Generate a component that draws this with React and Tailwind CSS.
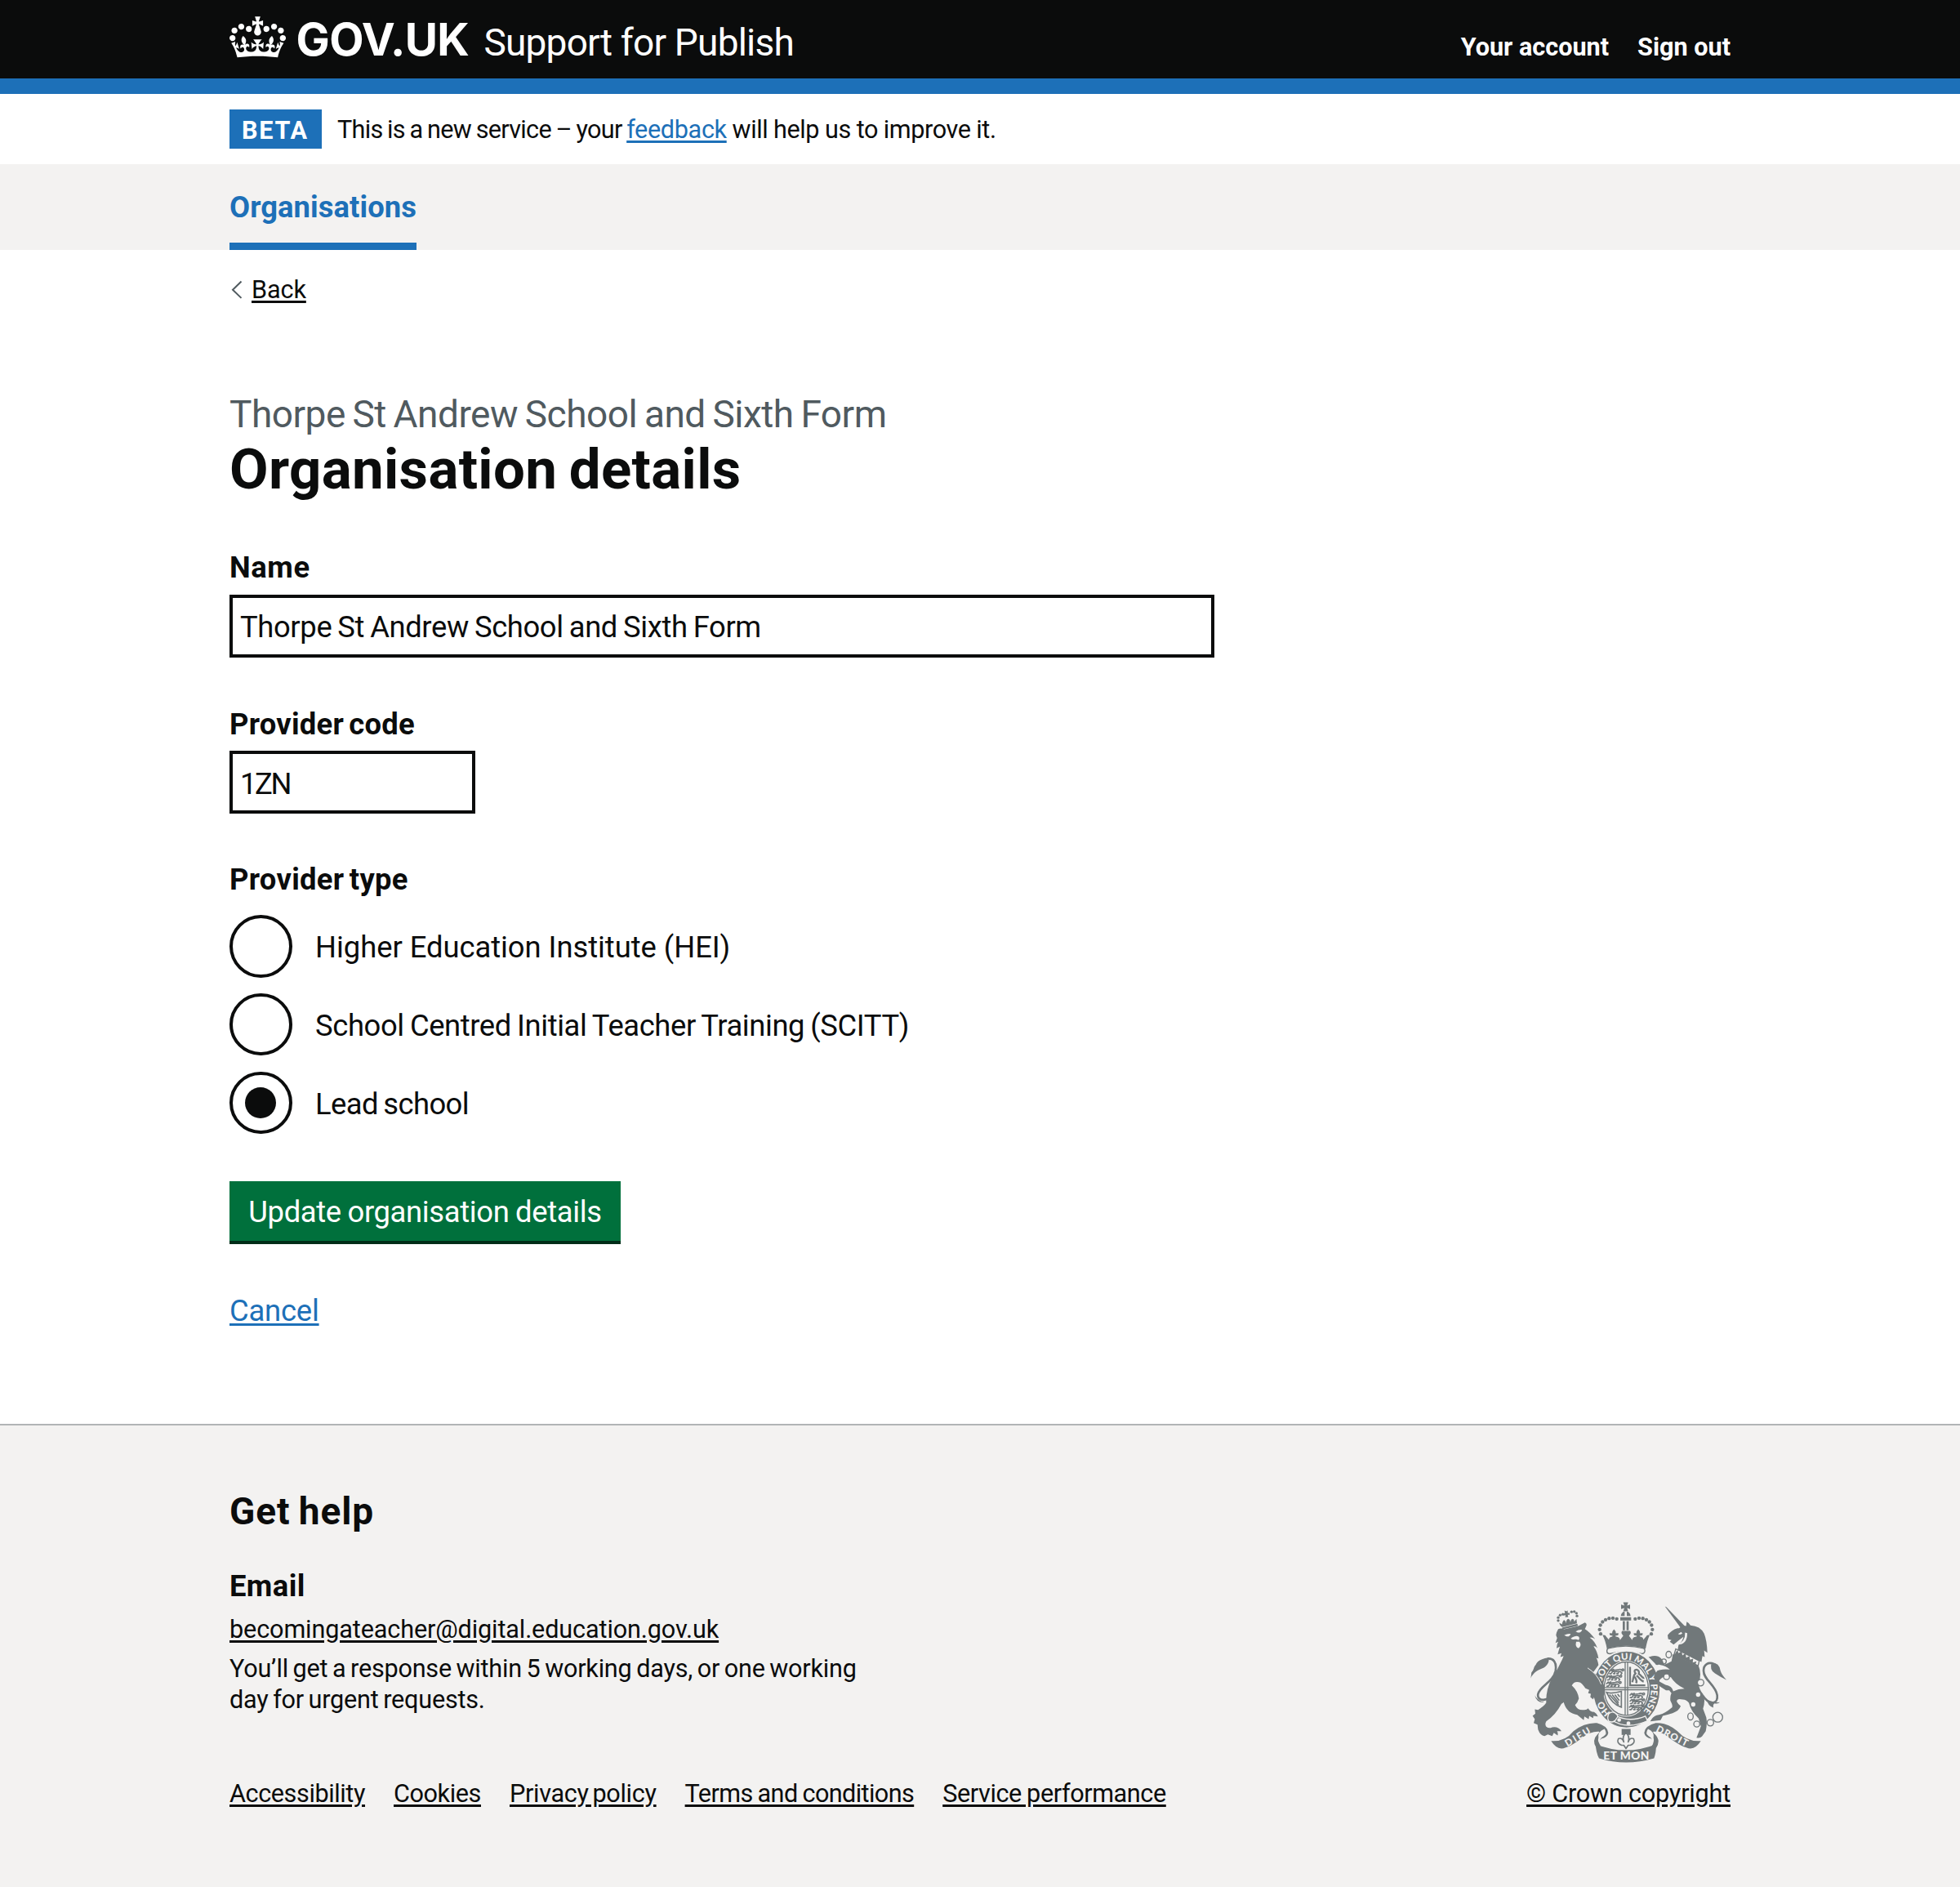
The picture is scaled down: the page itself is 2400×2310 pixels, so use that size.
function Crown() {
  return (
    <svg viewBox="0 0 132 97" className="mt-[20px] h-[51px] w-[69px] shrink-0" fill="currentColor" aria-hidden="true">
      <path d="M25 30.2c3.5 1.5 7.7-.2 9.1-3.7 1.5-3.6-.2-7.8-3.9-9.2-3.6-1.4-7.6.3-9.1 3.9-1.4 3.5.3 7.5 3.9 9zM9 39.5c3.6 1.5 7.8-.2 9.2-3.7 1.5-3.6-.2-7.8-3.9-9.1-3.6-1.5-7.6.2-9.1 3.8-1.4 3.5.3 7.5 3.8 9zM4.4 57.2c3.5 1.5 7.7-.2 9.1-3.8 1.5-3.6-.2-7.7-3.9-9.1-3.5-1.5-7.6.3-9.1 3.8-1.4 3.5.3 7.6 3.9 9.1zm38.3-21.4c3.5 1.5 7.7-.2 9.1-3.8 1.5-3.6-.2-7.7-3.9-9.1-3.6-1.5-7.6.3-9.1 3.8-1.3 3.6.4 7.7 3.9 9.1zm64.4-5.6c-3.6 1.5-7.8-.2-9.1-3.7-1.5-3.6.2-7.8 3.8-9.2 3.6-1.4 7.7.3 9.2 3.9 1.3 3.5-.4 7.5-3.9 9zm15.9 9.3c-3.6 1.5-7.7-.2-9.1-3.7-1.5-3.6.2-7.8 3.7-9.1 3.6-1.5 7.7.2 9.2 3.8 1.5 3.5-.3 7.5-3.8 9zm4.7 17.7c-3.6 1.5-7.8-.2-9.2-3.8-1.5-3.6.2-7.7 3.9-9.1 3.6-1.5 7.7.3 9.2 3.8 1.3 3.5-.4 7.6-3.9 9.1zM89.3 35.8c-3.6 1.5-7.8-.2-9.2-3.8-1.4-3.6.2-7.7 3.9-9.1 3.6-1.5 7.7.3 9.1 3.8 1.5 3.6-.3 7.7-3.8 9.1zM69.7 17.7l8.9 4.7V9.3l-8.9 2.8c-.2-.3-.5-.6-.9-.9L72.4 0H59.6l3.5 11.2c-.3.3-.6.5-.9.9l-8.8-2.8v13.1l8.8-4.7c.3.3.6.7.9.9l-5 15.4v.1c-.2.8-.4 1.6-.4 2.4 0 4.1 3.1 7.5 7 8.1h.2c.3 0 .7.1 1 .1.4 0 .7 0 1-.1h.2c4-.6 7.1-4.1 7.1-8.1 0-.8-.1-1.7-.4-2.4V34l-5.1-15.4c.4-.2.7-.6 1-.9zM66 92.8c16.9 0 32.8 1.1 47.1 3.2 4-16.9 8.9-26.7 14-33.5l-9.6-3.4c1 4.9 1.1 7.2 0 10.2-1.5-1.4-3-4.3-4.2-8.7L108.6 76c2.8-2 5-3.2 7.5-3.3-4.4 9.4-10 11.9-13.6 11.2-4.3-.8-6.3-4.6-5.6-7.9 1-4.7 5.7-5.9 8-.5 4.3-8.7-3-11.4-7.6-8.8 7.1-7.2 7.9-13.5 2.1-21.1-8 6.1-8.1 12.3-4.5 20.8-4.7-5.4-12.1-2.5-9.5 6.2 3.4-5.2 7.9-2 7.2 3.1-.6 4.3-6.4 7.8-13.5 7.2-10.3-.9-10.9-8-11.2-13.8 2.5-.5 7.1 1.8 11 7.3L80.2 60c-4.1 4.4-8 5.3-12.3 5.4 1.4-4.4 8-11.6 8-11.6H55.5s6.4 7.2 7.9 11.6c-4.2-.1-8-1-12.3-5.4l1.4 16.4c3.9-5.5 8.5-7.7 10.9-7.3-.3 5.8-.9 12.8-11.1 13.8-7.2.6-12.9-2.9-13.5-7.2-.7-5 3.8-8.3 7.1-3.1 2.7-8.7-4.6-11.6-9.4-6.2 3.7-8.5 3.6-14.7-4.6-20.8-5.8 7.6-5 13.9 2.2 21.1-4.7-2.6-11.9.1-7.7 8.8 2.3-5.5 7.1-4.2 8.1.5.7 3.3-1.3 7.1-5.7 7.9-3.5.7-9-1.8-13.5-11.2 2.5.1 4.7 1.3 7.5 3.3l-4.7-15.4c-1.2 4.4-2.7 7.2-4.3 8.7-1.1-3-.9-5.3 0-10.2l-9.5 3.4c5 6.9 9.9 16.7 14 33.5 14.8-2.1 30.8-3.2 47.7-3.2z" />
    </svg>
  );
}

const G = "#71787a";
const B = "#f3f2f1";

const archBeads = [
  [330, 179], [326, 163], [329, 147], [337, 135], [348, 127], [361, 122], [375, 121], [389, 124],
];

/* A small passant lion used in the shield quarters */
function Passant({ x, y }) {
  return (
    <path
      transform={`translate(${x} ${y})`}
      d="M0 8l6-6 5 2 4-3M8 6c8-3 14 0 24-3 4-2 8-4 12 0l4 4M10 7c8 5 18 3 30 2M12 9l-6 8h-5M18 10l2 7h-5M34 9l-2 8h-5M40 9l6 6-3 4M46 2c5-4 9-1 6 4"
      fill="none"
      stroke={G}
      strokeWidth="5"
      strokeLinecap="round"
      strokeLinejoin="round"
    />
  );
}

function Crest() {
  return (
    <svg viewBox="72 62 720 590" className="h-[197px] w-[240px]" fill={G} aria-hidden="true">
      {/* royal crown */}
      <path d="M413 63h18l-4 12 11-4v17l-11-4 4 12h-18l4-12-12 4V71l12 4z" />
      <path d="M404 113q2-14 14-16v16zM440 113q-2-14-14-16v16z" />
      <path d="M402 118h40v12h-40zM411 132h8v34h-8zM425 132h8v34h-8z" />
      {archBeads.map(([x, y]) => (
        <g key={x}>
          <circle cx={x} cy={y} r="6.5" />
          <circle cx={846 - x} cy={y} r="6.5" />
        </g>
      ))}
      <path d="M337 184q10-3 14 6l9 10q0-8 8-10 6 0 6-4l-10-2-2-7q6-2 10 0 0-9 7-15 8 7 7 15 4-2 10 0l-2 7-10 2q0 4 6 4 10 2 11 12l12-16-6-8q-2-6 2-10h29q4 4 2 10l-6 8 12 16q1-10 11-12 6 0 6-4l-10-2-2-7q6-2 10 0 0-9 7-15 8 7 7 15 4-2 10 0l-2 7-10 2q0 4 6 4 8 2 8 10l9-10q4-9 14-6-9 18-15 50-70-22-142 0-5-30-16-50z" />
      <path d="M358 232q64-16 130 0 6 4 4 12-3 9-12 8-58-17-116 0-10 0-11-8-1-9 5-12z" fill={B} stroke={G} strokeWidth="4" />

      {/* lion tail */}
      <path d="M152 396c-10 32-58 34-52 4 6-30 56-44 64-84 6-34-8-48-30-46" fill="none" stroke={G} strokeWidth="8" />
      <path d="M88 404q8 18 34 26-28 2-34-26zM72 342c4-10 2-14 4-22 10-8 6-18 16-28 4-12 18-22 46-26 4 12 0 26-18 38-20 8-34 14-48 38z" />

      {/* garter and shield */}
      <ellipse cx="425" cy="383" rx="124" ry="142" fill={G} stroke={B} strokeWidth="5" />
      <ellipse cx="424" cy="380" rx="86" ry="103" fill={B} />
      <ellipse cx="424" cy="380" rx="81" ry="98" fill="none" stroke={G} strokeWidth="4" />
      <path d="M418 282h4v194h-4zM427 282h4v194h-4zM340 374h168v4H340zM340 382h168v4H340z" />
      <Passant x="362" y="308" />
      <Passant x="354" y="331" />
      <Passant x="352" y="354" />
      <Passant x="438" y="396" />
      <Passant x="438" y="418" />
      <Passant x="436" y="440" />
      <path d="M438 300v68h56M446 356c6-14 2-24 12-32-6-8-4-14 4-14 8 2 10 8 8 16 10 4 12 18 20 14M462 332c10 8 16 20 26 22M456 336c2 10 10 14 4 24" fill="none" stroke={G} strokeWidth="7" />
      <path d="M352 394q18 6 54-4v58q-34-10-54-54zM362 402l34 38M372 402l24 30M382 402l16 22M392 400l8 10" fill="none" stroke={G} strokeWidth="5" />
      <path id="motto" d="M334 356A92 110 0 1 1 486 464" fill="none" />
      <path id="motto-start" d="M367 469A92 110 0 0 1 332 382" fill="none" />
      <g fill={B} fontFamily="Lato, sans-serif" fontWeight="900" fontSize="34">
        <text>
          <textPath href="#motto" textLength="376">SOIT QUI MAL Y PENSE</textPath>
        </text>
        <text>
          <textPath href="#motto-start">HO</textPath>
        </text>
      </g>
      <path d="M364 492q62 42 138 6l-8-17q-62 26-116-6z" fill={G} stroke={B} strokeWidth="4" />
      <path d="M360 472q14-12 26 0 12 8 2 18-10 18-28 10-8-14 0-28z" fill={G} stroke={B} strokeWidth="4" />
      <circle cx="398" cy="495" r="7" fill={B} />
      <circle cx="432" cy="507" r="7" fill={B} />

      {/* lion */}
      <path d="M168 174l6-13q12-4 22 1l52-12 24-13q10 4 4 15l-4 9q18 10 38 38-12-10-20-6 18 12 28 38-8-8-14-6 14 18 18 44l-8-2q6 12 8 26l-20 28q26 10 40 46 6 26-2 42l-8 8-8-8-4 10-14-8-4 8-10-8 2-12-10-2 4-12-14-6q-14-22-24-23-18-4-26 12 22 20 26 48-4 14-14 24 10 22 34 18 10 0 14-6 6 12 22 14 10 6 14 16l-16-2-2 8-14-8-2 12-16-10-2 14q-14-12-24-20-38-4-50-46-4 4-8 6-22 42-56 64-6 10 0 20 10 8 22 2 22-4 34 14l-16 0q4 6 2 16l-14-10-6 12-16-6-12 6q-16-2-24-24l-2-18-14-6 4-14-8-12 10-8-2-16 12 2q22-14 30-26-2-48 22-92 26-40 42-80l-12 4 4-14-14 4q4-14 8-28l-12 6q0-14 6-24l-10 4 6-18-4-10z" />
      <path d="M282 304q36 22 50 60" fill="none" stroke={B} strokeWidth="3" />
      <path d="M196 184q14-8 24-5-4 11-15 9zM238 170q12-8 24-6-4 11-16 10zM220 196q6-6 14-8 10-3 16 2 4 8-2 12-6-5-14-3-8 2-14-3zM240 208h12q10 13-3 24-14-4-9-24z" fill={B} />
      {/* lion crown */}
      <path d="M178 138l10 6q2-14 8-16 6 2 6 12 2-14 9-16 7 2 8 12 2-12 9-12 5 2 5 10l8-10 2 16-54 14q-9-4-11-16z" />
      <path d="M188 156l56-14 3 7-58 14z" />
      <path d="M197 93l7 3 5-3 0 9 7 0 0 7-7 0 2 8-11 1 1-8-7 2-1-7 6-3z" />
      <g>
        {[[174, 130], [174, 119], [181, 110], [191, 107], [223, 98], [233, 97], [241, 103], [243, 113]].map(([x, y]) => (
          <circle key={x * 1000 + y} cx={x} cy={y} r="5" />
        ))}
      </g>

      {/* unicorn */}
      <path d="M566 78l6 3 66 68-14 8z" />
      <path d="M618 158l14-10 12 2 2-16q8 4 14 14 36 2 50 30 10 24 12 70l-12-8 2 24-8-4-4 22-88-40 4-22q16-16 18-30l-14 10-22 18-14-10 6-6-12-4-2-14q14-20 36-26z" />
      <path d="M640 174q2 34-30 44 38 2 38-42zM614 179l12-7 4 6q-8 6-16 1z" fill={B} />
      <path d="M606 234l86 44-4 18-88-42z" fill={B} stroke={G} strokeWidth="4" />
      <path d="M604 250l8-12 4 12 12-8 2 16 12-8 2 16 12-6 2 14 12-4-2 14 14-4-4 12-76-34z" />
      <path d="M598 254l92 44q12 26 0 66 2 20 16 36 10 22 0 54l12 32q4 24-2 50l-14 20q-8 8-20 4l8-20 8-22-8-28q-28-26-36-58-10-12-22-12-24-6-22 8 4 8 14 16-6 18-30 26-18 6-36 10-4 10-8 16l-38 4q10-18 24-22 26-4 52-26 12-2-2-28-2-26 10-34 20-10 42-10-34-16-50-42-20-8-32 2-14 10-10 14l22 12q24 4 28 22 2 8-4 12l-10-14-12 0-22-14q-22-16-22-40l12-18q24-8 46-4-14-16-40-18-12 4-14-4l-24-24 14-4q24-4 36 14l8 18q16-6 26-12 4-16 4-26z" />
      <path d="M704 404c30 44 58 30 54 0-6-38-50-56-50-90 0-22 18-34 38-24" fill="none" stroke={G} strokeWidth="8" />
      <path d="M738 284q28 0 32 30 4 14 22 34-24-12-42-24-22-14-12-40zM720 420q4 24 24 30-2-12 4-16 12 4 20-4-22 2-48-10z" />
      <g fill={B}>
        <circle cx="697" cy="358" r="10" />
        <circle cx="688" cy="402" r="8" />
        <circle cx="670" cy="438" r="8" />
        <circle cx="572" cy="336" r="9" />
      </g>
      <g fill="none" stroke={G} strokeWidth="4">
        <ellipse cx="580" cy="255" rx="10" ry="12" />
        <circle cx="562" cy="280" r="9" />
        <circle cx="572" cy="336" r="11" />
        <circle cx="697" cy="358" r="12" />
        <ellipse cx="660" cy="482" rx="10" ry="13" />
        <circle cx="683" cy="510" r="11" />
        <circle cx="733" cy="505" r="12" />
        <circle cx="760" cy="485" r="18" />
      </g>

      {/* fleur-de-lis */}
      <path d="M407 528h33v22h-33z" />
      <path d="M423 542q16 14 8 34 6-18 20-12 8 16-12 24h-8l-8 12-8-12h-8q-20-8-12-24 14-6 20 12-8-20 8-34z" fill={B} stroke={G} strokeWidth="5" strokeLinejoin="round" />

      {/* motto ribbon */}
      <path d="M148 572q50 4 82-36 40-32 86-30 40 10 42 36-2 16-26 22-14 10-2 26l-16 8q-18-28 4-50 10-8 6-10-30-2-58 20-52 40-80 42-22-2-38-28z" />
      <path d="M698 572q-50 4-86-36-38-32-80-30-40 10-42 36 2 16 26 22 14 10 2 26l16 8q18-28-4-50-10-8-6-10 30-2 54 20 54 40 82 42 22-2 38-28z" />
      <path d="M322 560q-4-22 22-32 12 18-2 26-20 8-14 30-10-10-6-24zM524 560q4-22-20-32-12 18 2 26 18 8 12 30 10-10 6-24z" fill={B} />
      <path d="M312 584q110 44 222 0 0 30-8 52-104 30-202 0-12-24-12-52z" />
      <g fill={B} fontFamily="Lato, sans-serif" fontWeight="900">
        <text x="208" y="594" fontSize="35" textLength="102" transform="rotate(-31 208 594)">DIEU</text>
        <text x="531" y="536" fontSize="35" textLength="126" transform="rotate(27 531 536)">DROIT</text>
        <text x="340" y="641" fontSize="41" textLength="168">ET MON</text>
      </g>
    </svg>
  );
}

function TextField({ label, labelClass, value, className }) {
  return (
    <div>
      <label className={`block pt-px text-[36.4px] leading-[48px] font-bold ${labelClass}`}>{label}</label>
      <div className={`mt-[8.7px] flex h-[77px] items-center border-4 border-[#0b0c0c] pl-[9px] pt-[4px] text-[36.4px] leading-[48px] ${className}`}>
        {value}
      </div>
    </div>
  );
}

function Radio({ checked, children, className }) {
  return (
    <div className="flex h-[76.6px] items-center">
      <span className="flex size-[76.6px] shrink-0 items-center justify-center rounded-full border-4 border-[#0b0c0c]">
        {checked && <span className="size-[38.4px] rounded-full bg-[#0b0c0c]" />}
      </span>
      <span className={`ml-[28.5px] pt-[4px] text-[36.4px] leading-[48px] whitespace-nowrap ${className}`}>{children}</span>
    </div>
  );
}

const link = "underline decoration-[3px] underline-offset-[3px]";

export default function App() {
  return (
    <div className="min-h-[2310px] bg-white font-['Roboto','Liberation_Sans',sans-serif] text-[#0b0c0c]">
      <header className="h-[115px] border-b-[19px] border-[#1d70b8] bg-[#0b0c0c] text-white">
        <div className="mx-auto flex w-[1838px] items-start whitespace-nowrap">
          <Crown />
          <span className="mt-[18px] ml-[12.5px] w-[211px] font-['Inter','Liberation_Sans',sans-serif] text-[55px] leading-[60px] font-bold tracking-[-0.6px]">GOV.UK</span>
          <span className="mt-[25px] ml-[19px] text-[46px] leading-[54px] tracking-[-0.8px]">Support for Publish</span>
          <nav className="mt-[38.5px] ml-auto flex gap-[35px] text-[30.6px] leading-[38px] font-bold">
            <a>Your account</a>
            <a>Sign out</a>
          </nav>
        </div>
      </header>

      <div className="h-[86px] pt-[19px]">
        <div className="mx-auto flex w-[1838px] items-start whitespace-nowrap">
          <strong className="h-[48px] w-[113px] bg-[#1d70b8] pt-[1.5px] pl-[15px] text-[30.6px] leading-[48px] font-bold tracking-[1.7px] text-white">BETA</strong>
          <p className="ml-[19px] text-[30.6px] leading-[49px] tracking-[-0.7px] [word-spacing:-1.3px]">
            This is a new service – your <a className={`${link} tracking-[-0.35px] text-[#1d70b8]`}>feedback</a>
            <span className="tracking-[-0.42px] [word-spacing:-0.3px]"> will help us to improve it.</span>
          </p>
        </div>
      </div>

      <nav className="h-[105px] bg-[#f3f2f1]">
        <div className="mx-auto flex h-full w-[1838px]">
          <a className="h-full border-b-[9px] border-[#1d70b8] pt-[29px] text-[36.4px] leading-[48px] font-bold tracking-[0.07px] text-[#1d70b8]">Organisations</a>
        </div>
      </nav>

      <main className="mx-auto w-[1838px]">
        <div className="mt-[30px] flex h-[38px] items-start text-[30.6px] leading-[38px]">
          <svg viewBox="0 0 14 24" className="mt-[7px] ml-[2px] h-[24px] w-[14px]" fill="none" stroke="#505a5f" strokeWidth="2">
            <path d="M12.5 1.5L2 11.7l10.5 10.2" />
          </svg>
          <a className={`ml-[11px] tracking-[-0.1px] ${link}`}>Back</a>
        </div>

        <span className="mt-[104.4px] block text-[46px] leading-[58px] tracking-[-0.5px] text-[#505a5f] [word-spacing:-2.2px]">Thorpe St Andrew School and Sixth Form</span>
        <h1 className="mb-[56.6px] text-[69px] leading-[77px] font-bold tracking-[0.35px] [word-spacing:-3px]">Organisation details</h1>

        <div className="flex flex-col gap-[57px]">
          <TextField label="Name" labelClass="tracking-[0.6px]" value="Thorpe St Andrew School and Sixth Form" className="w-[1206px] tracking-[-0.38px] [word-spacing:-1.6px]" />
          <TextField label="Provider code" labelClass="tracking-[0.25px] [word-spacing:-3px]" value="1ZN" className="w-[301.4px] tracking-[-2.4px]" />
        </div>

        <fieldset className="mt-[56px]">
          <legend className="pt-px text-[36.4px] leading-[48px] font-bold tracking-[0.3px] [word-spacing:-3px]">Provider type</legend>
          <div className="mt-[18.8px] flex flex-col gap-[19.15px]">
            <Radio className="tracking-[-0.05px]">Higher Education Institute (HEI)</Radio>
            <Radio className="tracking-[-0.4px] [word-spacing:-1.5px]">School Centred Initial Teacher Training (SCITT)</Radio>
            <Radio checked className="tracking-[-0.6px] [word-spacing:-2px]">Lead school</Radio>
          </div>
        </fieldset>

        <button className="mt-[57.8px] block h-[73px] w-[479px] bg-[#00703c] pt-[2px] text-[36.4px] leading-[48px] tracking-[-0.35px] whitespace-nowrap text-white shadow-[0_4px_0_#002d18] [word-spacing:-1px]">
          Update organisation details
        </button>

        <p className="mt-[62px] text-[36.4px] leading-[48px] tracking-[-0.2px]">
          <a className={`${link} text-[#1d70b8]`}>Cancel</a>
        </p>
      </main>

      <footer className="mt-[114px] h-[567px] border-t-2 border-[#b1b4b6] bg-[#f3f2f1]">
        <div className="mx-auto flex w-[1838px] items-end justify-between whitespace-nowrap pt-[76px]">
          <div>
            <h2 className="text-[46px] leading-[58px] font-bold tracking-[0.9px] [word-spacing:-2px]">Get help</h2>
            <h3 className="mt-[38.6px] text-[36.4px] leading-[48px] font-bold tracking-[0.4px]">Email</h3>
            <p className="mt-[10px] text-[30.6px] leading-[38px] tracking-[-0.12px]">
              <a className={link}>becomingateacher@digital.education.gov.uk</a>
            </p>
            <p className="mt-[10px] text-[30.6px] leading-[38.3px] tracking-[-0.22px] [word-spacing:-1.7px]">
              You’ll get a response within 5 working days, or one working
              <br />
              day for urgent requests.
            </p>
            <div className="mt-[76.6px] flex text-[30.6px] leading-[38px]">
              <a className={`${link} tracking-[-0.4px]`}>Accessibility</a>
              <a className={`${link} ml-[35px] tracking-[-0.4px]`}>Cookies</a>
              <a className={`${link} ml-[35px] tracking-[-0.3px] [word-spacing:-2.6px]`}>Privacy policy</a>
              <a className={`${link} ml-[35px] tracking-[-0.6px] [word-spacing:-1px]`}>Terms and conditions</a>
              <a className={`${link} ml-[35px] tracking-[-0.4px] [word-spacing:-1px]`}>Service performance</a>
            </div>
          </div>
          <div className="flex flex-col items-end">
            <div className="mr-[5px]">
              <Crest />
            </div>
            <a className={`${link} mt-[19px] text-[30.6px] leading-[38px] tracking-[-0.2px]`}>© Crown copyright</a>
          </div>
        </div>
      </footer>
    </div>
  );
}
